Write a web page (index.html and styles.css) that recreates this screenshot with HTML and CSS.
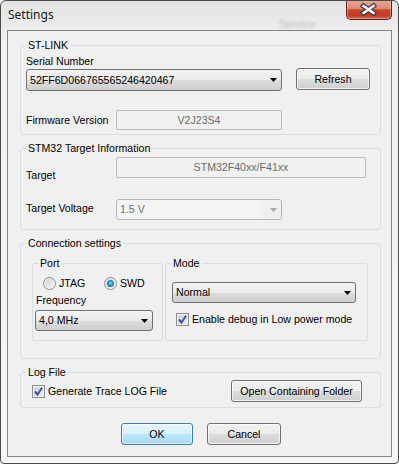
FILE: index.html
```html
<!DOCTYPE html>
<html>
<head>
<meta charset="utf-8">
<title>Settings</title>
<link rel="stylesheet" href="styles.css">
</head>
<body>
<div class="window">
  <div class="titlebar">
    <span class="title">Settings</span>
    <span class="ghost">Service</span>
    <div class="close">
      <svg width="44" height="19" viewBox="0 0 44 19">
        <path d="M16.5 6 L26.5 13 M26.5 6 L16.5 13" stroke="#3a3a3a" stroke-width="5" stroke-linecap="square" fill="none"/>
        <path d="M16.5 6 L26.5 13 M26.5 6 L16.5 13" stroke="#fff" stroke-width="2.6" stroke-linecap="square" fill="none"/>
      </svg>
    </div>
  </div>
  <div class="client">
    <fieldset class="group g-stlink">
      <legend>ST-LINK</legend>
      <div class="lbl">Serial Number</div>
      <div class="row serial-row">
        <div class="combo serial-combo"><span class="ctext">52FF6D066765565246420467</span><svg class="arrow" width="7" height="4" viewBox="0 0 7 4"><polygon points="0,0 7,0 3.5,4" fill="#000"/></svg></div>
        <div class="btn refresh">Refresh</div>
      </div>
      <div class="row fw-row">
        <span class="lbl field-lbl">Firmware Version</span>
        <div class="tbox fw-box">V2J23S4</div>
      </div>
    </fieldset>

    <fieldset class="group g-target">
      <legend>STM32 Target Information</legend>
      <div class="row target-row">
        <span class="lbl field-lbl target-lbl">Target</span>
        <div class="tbox target-box">STM32F40xx/F41xx</div>
      </div>
      <div class="row volt-row">
        <span class="lbl field-lbl volt-lbl">Target Voltage</span>
        <div class="combo disabled volt-combo"><span class="ctext">1.5 V</span><svg class="arrow" width="7" height="4" viewBox="0 0 7 4"><polygon points="0,0 7,0 3.5,4" fill="#a7a7a7"/></svg></div>
      </div>
    </fieldset>

    <fieldset class="group g-conn">
      <legend>Connection settings</legend>
      <div class="subrow">
        <fieldset class="sub port">
          <legend>Port</legend>
          <div class="radios">
            <div class="opt opt-jtag"><span class="radio"></span><span class="otext">JTAG</span></div>
            <div class="opt"><span class="radio checked"></span><span class="otext">SWD</span></div>
          </div>
          <div class="lbl freq-lbl">Frequency</div>
          <div class="combo freq-combo"><span class="ctext">4,0 MHz</span><svg class="arrow" width="7" height="4" viewBox="0 0 7 4"><polygon points="0,0 7,0 3.5,4" fill="#000"/></svg></div>
        </fieldset>
        <fieldset class="sub mode">
          <legend>Mode</legend>
          <div class="combo mode-combo"><span class="ctext">Normal</span><svg class="arrow" width="7" height="4" viewBox="0 0 7 4"><polygon points="0,0 7,0 3.5,4" fill="#000"/></svg></div>
          <div class="opt check-row mode-check"><span class="check"><svg width="11" height="11" viewBox="0 0 11 11"><path d="M2 5.5 L4.5 8.5 L9 1.8" stroke="#3d52a0" stroke-width="2" fill="none"/></svg></span><span class="otext">Enable debug in Low power mode</span></div>
        </fieldset>
      </div>
    </fieldset>

    <fieldset class="group g-log">
      <legend>Log File</legend>
      <div class="row log-row">
        <div class="opt check-row log-check"><span class="check"><svg width="11" height="11" viewBox="0 0 11 11"><path d="M2 5.5 L4.5 8.5 L9 1.8" stroke="#3d52a0" stroke-width="2" fill="none"/></svg></span><span class="otext">Generate Trace LOG File</span></div>
        <div class="btn folder">Open Containing Folder</div>
      </div>
    </fieldset>

    <div class="actions">
      <div class="btn default ok">OK</div>
      <div class="btn cancel">Cancel</div>
    </div>
  </div>
</div>
</body>
</html>
```

FILE: styles.css
```css
* { box-sizing: border-box; }

body {
  margin: 0;
  font: 10.6px/13px "Liberation Sans", Arial, sans-serif;
  color: #000;
  background: #fff;
}

.window {
  width: 399px;
  height: 464px;
  border: 1px solid #4a4a4a;
  border-radius: 6px 6px 4px 4px;
  background: linear-gradient(#e3e3e3, #f1f1f1 40px, #f6f6f6);
  display: flex;
  flex-direction: column;
  position: relative;
  overflow: hidden;
}

.titlebar {
  height: 29px;
  display: flex;
  align-items: flex-start;
  position: relative;
  flex: none;
}

.title {
  font: 12px/16px "Noto Sans", "DejaVu Sans", sans-serif;
  color: #1a1a1a;
  margin: 6px 0 0 7px;
}

.ghost {
  position: absolute;
  left: 278px;
  top: 17px;
  color: rgba(80, 80, 80, 0.3);
  filter: blur(1.4px);
  font-size: 11px;
}

.close {
  margin: -1px 6px 0 auto;
  width: 46px;
  height: 20px;
  border: 1px solid #5a2119;
  border-top: none;
  border-radius: 0 0 5px 5px;
  background: linear-gradient(#e8a898 0%, #de8a76 45%, #c8472f 52%, #c13c25 80%, #d0644a 100%);
  box-shadow: inset 0 0 0 1px rgba(255, 220, 210, 0.45);
  display: flex;
  align-items: center;
  justify-content: center;
}

.client {
  flex: 1;
  margin: 0 6px 6px 6px;
  border: 1px solid #858585;
  background: #f0f0f0;
  padding: 8px 10px 0 12px;
  display: flex;
  flex-direction: column;
}

fieldset {
  margin: 0;
  min-width: 0;
  min-inline-size: 0;
}

legend {
  padding: 0 2px;
  margin: 0;
  line-height: 13px;
}

.group {
  width: 361px;
  border: 1px solid #d5dfe5;
  border-radius: 3px;
  padding: 0 5px;
}

.group + .group { margin-top: 7px; }

.g-stlink { padding-top: 3px; padding-bottom: 4px; }
.g-target { padding-bottom: 9px; }
.g-conn { padding-bottom: 17px; }
.g-log { padding-bottom: 5px; }

.row {
  display: flex;
  align-items: flex-start;
}

.lbl { white-space: nowrap; }

.field-lbl { width: 90px; flex: none; }

/* combo boxes */
.combo {
  display: flex;
  align-items: center;
  border: 1px solid #707070;
  border-radius: 3px;
  background: linear-gradient(#f3f3f3 0%, #ebebeb 50%, #dddddd 51%, #cfcfcf 100%);
  padding: 0 4px 0 3px;
  flex: none;
}

.combo .ctext { flex: 1; white-space: nowrap; }
.combo .arrow { flex: none; display: block; }

.combo.disabled {
  border-color: #b3b7ba;
  background: linear-gradient(to right, #f4f4f4 0, #f4f4f4 144px, #f0f0f0 144px);
  color: #6d6d6d;
}

.serial-combo { width: 256px; height: 22px; margin-top: 1px; }
.volt-combo { width: 166px; height: 21px; margin-top: 17px; }
.freq-combo { width: 118px; height: 21px; margin-top: 3px; }
.mode-combo { width: 184px; height: 21px; margin-top: 12px; }

/* text boxes */
.tbox {
  border: 1px solid #bababa;
  border-radius: 2px;
  background: #f0f0f0;
  color: #6d6d6d;
  display: flex;
  align-items: center;
  justify-content: center;
  flex: none;
}

.fw-row { margin-top: 19px; align-items: center; }
.fw-box { width: 166px; height: 20px; }

.target-lbl { margin-top: 14px; }
.target-box { width: 250px; height: 21px; margin-top: 2px; }
.volt-lbl { margin-top: 20px; }

/* buttons */
.btn {
  border: 1px solid #707070;
  border-radius: 3px;
  background: linear-gradient(#f2f2f2 0%, #ebebeb 50%, #dddddd 51%, #cfcfcf 100%);
  box-shadow: inset 0 0 0 1px rgba(255, 255, 255, 0.7);
  height: 22px;
  display: flex;
  align-items: center;
  justify-content: center;
  flex: none;
  white-space: nowrap;
}

.btn.default {
  border-color: #3c7fb1;
  background: linear-gradient(#eaf6fd 0%, #d9f0fc 50%, #bee6fd 51%, #a7d9f5 100%);
  box-shadow: inset 0 0 0 1px rgba(255, 255, 255, 0.6);
}

.refresh { width: 74px; margin-left: 14px; }
.folder { width: 131px; margin-left: auto; margin-right: 13px; }

/* connection */
.subrow {
  display: flex;
  gap: 2px;
  margin-top: 7px;
  margin-left: 6px;
}

.sub {
  border: 1px solid #d5dfe5;
  border-radius: 3px;
  padding: 0;
}

.port { width: 131px; padding-left: 2px; padding-bottom: 9px; }
.port legend { margin-left: 3px; }
.mode { width: 203px; padding-left: 6px; }
.mode legend { margin-left: -1px; }

.radios {
  display: flex;
  margin: 7px 0 0 8px;
}

.opt {
  display: flex;
  align-items: center;
  white-space: nowrap;
}

.opt-jtag { width: 61px; }

.otext { margin-left: 3px; }

.radio {
  width: 13px;
  height: 13px;
  border-radius: 50%;
  border: 1px solid #8e8f8f;
  background: linear-gradient(135deg, #cfd0d1, #f7f7f7);
  box-shadow: inset 0 0 0 1px #f2f2f2;
  flex: none;
  display: flex;
  align-items: center;
  justify-content: center;
}

.radio.checked::after {
  content: "";
  width: 7px;
  height: 7px;
  border-radius: 50%;
  background: radial-gradient(circle at 50% 45%, #8fdcfb 0, #2b8fd0 45%, #10477f 100%);
}

.freq-lbl { margin: 4px 0 0 1px; }

.check {
  width: 13px;
  height: 13px;
  border: 1px solid #8e8f8f;
  background: linear-gradient(135deg, #c9ccd1, #f4f4f4);
  box-shadow: inset 0 0 0 1px #f3f3f3;
  flex: none;
  display: flex;
  align-items: center;
  justify-content: center;
}

.check svg { display: block; }

.mode-check { margin: 10px 0 0 4px; }

.log-row { margin-top: 1px; align-items: center; }
.log-check { margin-left: 6px; }

/* bottom buttons */
.actions {
  display: flex;
  margin-top: 15px;
  margin-left: 101px;
}

.ok { width: 72px; }
.cancel { width: 74px; margin-left: 14px; }
```
